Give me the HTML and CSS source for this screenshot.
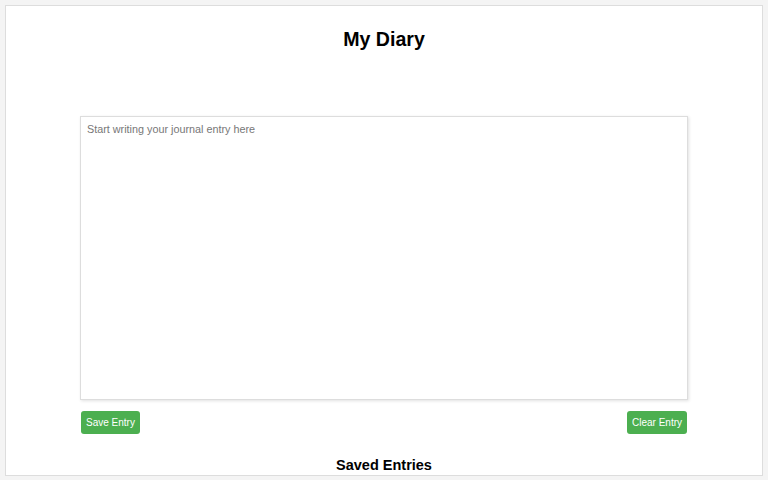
FILE: index.html
```html
<!DOCTYPE html>
<html>
<head>
<meta charset="utf-8">
<link rel="stylesheet" href="styles.css">
</head>
<body>
<div class="container">
  <h1 class="title">My Diary</h1>
  <div class="editor">
    <textarea class="entry" placeholder="Start writing your journal entry here"></textarea>
    <div class="actions">
      <button class="btn">Save Entry</button>
      <button class="btn">Clear Entry</button>
    </div>
  </div>
  <h2 class="subtitle">Saved Entries</h2>
</div>
</body>
</html>
```
FILE: styles.css
```css
html, body {
  margin: 0;
  padding: 0;
}
body {
  background: #f4f4f4;
  font-family: "Liberation Sans", Arial, sans-serif;
  padding: 5px 5px 0 5px;
  height: 480px;
  box-sizing: border-box;
  overflow: hidden;
}
.container {
  background: #fff;
  border: 1px solid #ddd;
  height: 471px;
  box-sizing: border-box;
  padding-top: 22px;
  overflow: hidden;
}
.title {
  margin: 0;
  text-align: center;
  font-size: 19.6px;
  line-height: 23px;
  font-weight: bold;
  color: #000;
}
.editor {
  width: 608px;
  margin: 65px auto 0 auto;
}
.entry {
  display: block;
  width: 608px;
  height: 284px;
  box-sizing: border-box;
  border: 1px solid #ddd;
  box-shadow: 1px 1px 3px rgba(0,0,0,0.12);
  padding: 6px;
  font-family: "Liberation Sans", Arial, sans-serif;
  font-size: 10.8px;
  resize: none;
  margin: 0;
}
.entry::placeholder {
  color: #777;
}
.actions {
  display: flex;
  justify-content: space-between;
  margin-top: 11px;
  padding: 0 1px;
}
.btn {
  background: #4caf50;
  color: #fff;
  border: none;
  border-radius: 3px;
  height: 23px;
  padding: 0 5px;
  font-family: "Liberation Sans", Arial, sans-serif;
  font-size: 10px;
}
.subtitle {
  margin: 23px 0 0 0;
  text-align: center;
  font-size: 14.5px;
  line-height: 17px;
  font-weight: bold;
}
```
